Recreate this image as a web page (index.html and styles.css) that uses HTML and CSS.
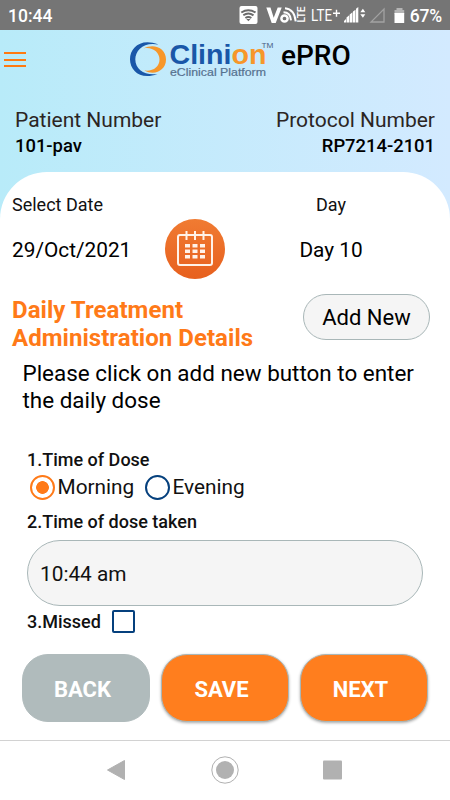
FILE: index.html
```html
<!DOCTYPE html>
<html lang="en">
<head>
<meta charset="utf-8">
<title>Clinion ePRO</title>
<link rel="stylesheet" href="styles.css">
</head>
<body>
<div class="phone">
  <div class="status">
    <span class="clock">10:44</span>
    <svg class="status-icons" width="212" height="30" viewBox="238 0 212 30">
      <rect x="239.500" y="6" width="18" height="18" rx="2" fill="#fff"/>
      <g fill="none" stroke="#6b6b6b" stroke-width="2"><path d="M241.300 12.500Q248.300 8 255.500 12.500M243.300 15.300Q248.300 11.800 253.500 15.300M245.400 18Q248.300 16 251.400 18"/></g>
      <path d="M246.300 19h4.200l-2.100 2.300z" fill="#6b6b6b"/>
      <path d="M266.300 7.500h4.200l3.200 10.200 4-10.200h4l-6 15.500h-4z" fill="#fff"/>
      <circle cx="284.500" cy="18.500" r="3.100" fill="none" stroke="#fff" stroke-width="2.500"/>
      <path d="M283.500 12.300q6.800 0 7.500 8M285 8.300q9.500 1 10.700 13" fill="none" stroke="#fff" stroke-width="2"/>
      <text class="vlte" transform="translate(305 22.500) rotate(-90)" textLength="16" lengthAdjust="spacingAndGlyphs">LTE</text>
      <text class="lte" x="311" y="21" textLength="21" lengthAdjust="spacingAndGlyphs">LTE</text>
      <path d="M333 13.300h7M336.500 9.800v7" stroke="#fff" stroke-width="1.400"/>
      <path d="M344 22.500v-1.500l2-2v3.500zM346.500 22.500v-5l2.700-2.300v7.300zM349.700 22.500v-8l2.800-2.300v10.300zM353 22.500v-11l2.500-1.800v12.800zM356 22.500V8.800l2.300-1.800v15.500z" fill="#fff"/>
      <path d="M360.300 12.300l2.600-3.600 2.400 3.600zM360.300 14.200h5l-2.400 3.600z" fill="#fff"/>
      <path d="M371 22h13V9z" fill="none" stroke="#a2a2a2" stroke-width="1.300"/>
      <path d="M396.500 8h6v2h1.700v4h-9.700v-4h2z" fill="#b4b4b4"/>
      <rect x="394.500" y="13" width="9.700" height="10" fill="#fff"/>
    </svg>
    <span class="battery">67%</span>
  </div>

  <header class="header">
    <div class="brand-row">
      <div class="menu"><i></i><i></i><i></i></div>
      <svg class="logo" width="146" height="44" viewBox="128 36 146 44">
        <path d="M158.500 44.500C141 37.500 130 47.500 130 59.300C130 71 141 80.500 157.500 74C145 76 135.300 69.500 135.300 59.300C135.300 50 144 41.500 158.500 44.500Z" fill="#1957a8"/>
        <path d="M143.500 48.500C154.500 43 166 48.500 166 59.500C166 70.500 154.500 76 144.500 70.500C153 71.500 159.500 67 159.500 59.500C159.500 52 152 46.500 143.500 48.500Z" fill="#f7972a"/>
        <text class="word" x="169.500" y="63.700" textLength="97" lengthAdjust="spacingAndGlyphs">Clini<tspan class="word-end">on</tspan></text>
        <text class="sub" x="170" y="75.700" textLength="96" lengthAdjust="spacingAndGlyphs">eClinical Platform</text>
        <text class="tm" x="261.500" y="47.700" textLength="12" lengthAdjust="spacingAndGlyphs">TM</text>
      </svg>
      <span class="epro">ePRO</span>
    </div>
    <div class="ids">
      <div><div class="id-label">Patient Number</div><div class="id-value">101-pav</div></div>
      <div class="right"><div class="id-label">Protocol Number</div><div class="id-value">RP7214-2101</div></div>
    </div>
  </header>

  <main class="card">
    <div class="date-row">
      <div class="date-col"><div class="small">Select Date</div><div class="value">29/Oct/2021</div></div>
      <svg class="calendar" width="62" height="62" viewBox="0 0 62 62">
        <defs><linearGradient id="cal" x1="0" y1="0" x2="0" y2="1"><stop offset="0" stop-color="#f07b32"/><stop offset="1" stop-color="#e7601e"/></linearGradient></defs>
        <circle cx="31" cy="31" r="30" fill="url(#cal)"/>
        <rect x="14" y="17" width="34" height="30" rx="2" fill="none" stroke="#fff2e8" stroke-width="2"/>
        <path d="M22.500 13v9M31 13v9M39.500 13v9" stroke="#fff2e8" stroke-width="2"/>
        <path fill="#fff2e8" d="M21 26h5v3.500h-5zM28.500 26h5v3.500h-5zM36 26h5v3.500h-5zM21 31.500h5v3.500h-5zM28.500 31.500h5v3.500h-5zM36 31.500h5v3.500h-5zM21 37h5v3.500h-5zM28.500 37h5v3.500h-5zM36 37h5v3.500h-5z"/>
      </svg>
      <div class="day-col"><div class="small">Day</div><div class="value">Day 10</div></div>
    </div>
    <div class="title-row">
      <h1>Daily Treatment<br>Administration Details</h1>
      <button class="add">Add New</button>
    </div>
    <p class="hint">Please click on add new button to enter<br>the daily dose</p>

    <section class="form">
      <div class="question">1.Time of Dose</div>
      <div class="radios">
        <span class="radio on"></span><span class="option morning">Morning</span>
        <span class="radio"></span><span class="option">Evening</span>
      </div>
      <div class="question taken">2.Time of dose taken</div>
      <div class="field">10:44 am</div>
      <div class="missed"><span class="question missed-label">3.Missed</span><span class="check"></span></div>
    </section>

    <div class="actions">
      <button class="btn back">BACK</button>
      <button class="btn">SAVE</button>
      <button class="btn">NEXT</button>
    </div>
  </main>

  <nav class="nav">
    <svg width="450" height="59" viewBox="0 741 450 59">
      <path d="M107.500 770L124.500 760.500V779.500Z" fill="#b1b1b1" stroke="#b1b1b1" stroke-linejoin="round"/>
      <circle cx="225" cy="770" r="13.200" fill="none" stroke="#b1b1b1" stroke-width="1"/>
      <circle cx="225" cy="770" r="9" fill="#b1b1b1"/>
      <rect x="323" y="760.500" width="19" height="19" rx="1" fill="#b1b1b1"/>
    </svg>
  </nav>
</div>
</body>
</html>
```
FILE: styles.css
```css
* { box-sizing: border-box; }
body { margin: 0; font-family: Roboto, "Liberation Sans", sans-serif; color: #111; }
button { font-family: inherit; margin: 0; padding: 0; }
.phone { width: 450px; height: 800px; display: flex; flex-direction: column; overflow: hidden; background: linear-gradient(90deg, #b8ebf9, #d3eaff); }
.status { height: 30px; flex: none; background: #757575; color: #fff; display: flex; align-items: center; position: relative; }
.clock { font-size: 17.500px; font-weight: 500; margin-left: 8px; width: 230px; line-height: 30px; padding-top: 1px; }
.status-icons { flex: none; }
.battery { position: absolute; right: 8px; top: 2px; font-size: 17.500px; line-height: 28px; font-weight: 500; letter-spacing: -.2px; }
.vlte { font-size: 10px; font-weight: 500; fill: #fff; }
.lte { font-size: 17px; fill: #fff; }
.header { height: 142px; flex: none; }
.brand-row { height: 66px; display: flex; align-items: flex-start; padding-top: 6px; }
.menu { width: 22px; margin: 16px 102px 0 4px; display: flex; flex-direction: column; gap: 4.500px; }
.menu i { height: 2px; background: #ff7a10; }
.logo { flex: none; }
.word { font: bold 27px "Liberation Sans", sans-serif; fill: #1957a8; }
.word-end { fill: #f7972a; }
.sub { font: 11px "Liberation Sans", sans-serif; fill: #56718f; stroke: #56718f; stroke-width: .2; }
.tm { font: 8px "Liberation Sans", sans-serif; fill: #4a5f85; }
.epro { font-size: 28px; font-weight: 500; color: #000; line-height: 36px; margin: 2px 0 0 7px; }
.ids { display: flex; justify-content: space-between; padding: 11px 15px 0; }
.right { text-align: right; }
.id-label { font-size: 21px; line-height: 26px; color: #2b2523; }
.id-value { font-size: 18.400px; line-height: 26px; font-weight: 500; color: #000; }
.card { height: 568px; flex: none; background: #fff; border-radius: 47px 47px 0 0; }
.date-row { display: flex; height: 110px; }
.date-col { width: 152px; padding: 20px 0 0 12px; }
.small { font-size: 18px; line-height: 26px; }
.value { font-size: 20.800px; line-height: 28px; margin-top: 18px; color: #000; }
.calendar { margin: 46px 0 0 12px; flex: none; }
.day-col { width: 210px; padding-top: 20px; text-align: center; }
.title-row { height: 76px; display: flex; justify-content: space-between; padding: 12px 20px 0 12px; }
h1 { font-size: 24px; line-height: 28px; font-weight: 700; color: #ff7a18; margin: 2px 0 0; white-space: nowrap; letter-spacing: .04px; }
.add { width: 127px; height: 46px; border: 1px solid #a9b7b8; border-radius: 23px; background: #f5f5f5; font-size: 22px; color: #000; }
.hint { height: 83px; margin: 0; padding: 2px 0 0 22.500px; font-size: 22.450px; line-height: 26.500px; color: #000; white-space: nowrap; }
.form { height: 213px; padding: 8px 27px 0; }
.question { font-size: 18px; line-height: 22px; font-weight: 500; color: #111; }
.radios { height: 32px; display: flex; align-items: center; padding-left: 2.500px; }
.radio { width: 25px; height: 25px; border: 2.500px solid #05407d; border-radius: 50%; flex: none; }
.radio.on { border-color: #ff7a18; background: radial-gradient(circle, #ff7a18 6px, #fff 6.700px); }
.option { font-size: 20.800px; margin-left: 3px; line-height: 28px; }
.morning { width: 87px; }
.taken { margin-top: 8px; }
.field { width: 396px; height: 66px; margin-top: 7px; border: 1px solid #a9b7b8; border-radius: 33px; background: #f5f5f5; font-size: 20.800px; line-height: 66px; padding-left: 12px; }
.missed { display: flex; height: 31px; align-items: center; }
.missed-label { width: 85px; }
.check { width: 23px; height: 23px; border: 2px solid #05407d; border-radius: 2px; }
.actions { display: flex; gap: 11px; padding-left: 22px; }
.btn { width: 128px; height: 68px; border: 1px solid #a9b7b8; border-radius: 26px; background: #ff7e1e; color: #fff; font-size: 22px; font-weight: 700; box-shadow: 0 1px 3px #0005; padding: 2px 7px 0 0; }
.btn.back { background: #b0bbbc; border-color: #b0bbbc; box-shadow: none; }
.nav { height: 60px; flex: none; background: #fff; border-top: 1px solid #d2d2d2; }
.nav svg { display: block; }
```
